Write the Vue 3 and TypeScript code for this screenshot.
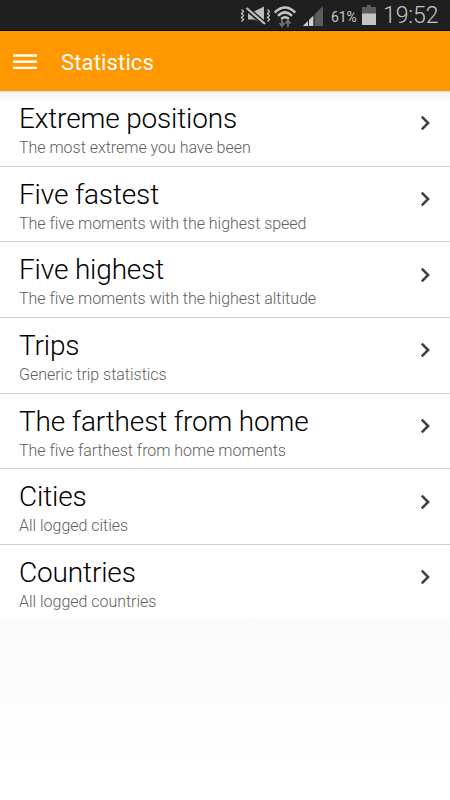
<script setup lang="ts">
interface Row { title: string; subtitle: string }
const rows: Row[] = [
  { title: 'Extreme positions', subtitle: 'The most extreme you have been' },
  { title: 'Five fastest', subtitle: 'The five moments with the highest speed' },
  { title: 'Five highest', subtitle: 'The five moments with the highest altitude' },
  { title: 'Trips', subtitle: 'Generic trip statistics' },
  { title: 'The farthest from home', subtitle: 'The five farthest from home moments' },
  { title: 'Cities', subtitle: 'All logged cities' },
  { title: 'Countries', subtitle: 'All logged countries' },
]
</script>

<template>
  <div class="screen">
    <header class="status">
      <svg class="mute" viewBox="0 0 30 20" width="30" height="20">
        <path d="M8 5.500h6L24 .5v18l-10-5H8z" fill="#bdbdbd" />
        <path d="M6 2.500l20 17.500" stroke="#1f1f1f" stroke-width="4" />
        <path d="M7 1.500l19 16.500" stroke="#1f1f1f" stroke-width="3.500" />
        <path d="M6.500 2l18.500 16" stroke="#bdbdbd" stroke-width="2.200" />
        <path d="M1.500 3.500l2 2-2 2 2 2-2 2 2 2-2 2M27.500 3.500l2 2-2 2 2 2-2 2 2 2-2 2" fill="none" stroke="#bdbdbd" stroke-width="1.400" />
      </svg>
      <svg class="wifi" viewBox="0 0 22 22" width="22" height="22">
        <path d="M.8 6.500Q11-3.500 21.200 6.500M4 9.800Q11 3 18 9.800M7.200 13Q11 9.500 14.800 13" fill="none" stroke="#c4c4c4" stroke-width="2.500" />
        <path d="M8 13.500v6M5.500 17L8 20l2.500-3M14 21v-6M11.500 17.500l2.500-3 2.500 3" fill="none" stroke="#707070" stroke-width="1.800" />
      </svg>
      <svg class="signal" viewBox="0 0 20 20" width="20" height="20">
        <path d="M0 20L20 0v20z" fill="#5c5c5c" />
        <path d="M0 20L10.500 9.500V20z" fill="#d0d0d0" />
        <path d="M5.500 11v9M11 7v13" stroke="#1f1f1f" />
      </svg>
      <span class="percent">61%</span>
      <svg class="battery" viewBox="0 0 14 20" width="14" height="20">
        <path d="M5 0h4v2h5v7H0V2h5z" fill="#5c5c5c" /><path d="M0 8.500h14V20H0z" fill="#c4c4c4" />
      </svg>
      <span class="clock">19:52</span>
    </header>
    <nav class="bar">
      <svg class="menu" viewBox="0 0 24 16" width="24" height="16"><path d="M0 1.500h24M0 7.700h24M0 13.900h24" stroke="#fff" stroke-width="2.400" /></svg>
      <h1>Statistics</h1>
    </nav>
    <ul class="list">
      <li v-for="row in rows" :key="row.title">
        <div class="copy"><h2>{{ row.title }}</h2><p>{{ row.subtitle }}</p></div>
        <svg class="chevron" viewBox="0 0 10 16" width="10" height="16"><path d="M1.800 1.700L8.100 8l-6.300 6.300" fill="none" stroke="#424242" stroke-width="2.600" /></svg>
      </li>
    </ul>
    <div class="rest"></div>
  </div>
</template>

<style>
body { margin: 0; }
</style>
<style scoped>
.screen { display: flex; flex-direction: column; width: 450px; height: 800px; font-family: Roboto, sans-serif; background: #fff; overflow: hidden; }
.status { display: flex; align-items: center; flex: none; height: 31px; background: #1f1f1f; color: #c4c4c4; padding: 0 0 0 240px; box-sizing: border-box; border-bottom: 1px solid #080808; }
.status svg { flex: none; }
.mute { margin-top: 1px; }
.wifi { margin: 3px 0 0 4px; }
.signal { margin: 2px 0 0 7px; }
.percent { width: 31px; margin: 3px 0 0 8px; font-size: 14px; letter-spacing: -.1px; }
.clock { font-size: 23px; font-weight: 300; margin: 1px 0 0 7px; line-height: 30px; letter-spacing: -.1px; }
.bar { display: flex; align-items: center; flex: none; height: 60px; background: #ff9800; padding-left: 13px; color: #fff; }
.menu { margin-top: 1px; }
h1 { margin: 3px 0 0 24px; font-size: 22px; line-height: 26px; font-weight: 400; letter-spacing: .15px; }
.list { flex: none; list-style: none; margin: 0; padding: 0; background: linear-gradient(#c8c8c8 0, #f2f2f2 1px, #fff 12px); }
li { display: flex; justify-content: space-between; height: 75.670px; box-sizing: border-box; border-bottom: 1px solid #d2d2d2; padding: 0 20px 0 19px; }
li:last-child { height: 74.500px; border-bottom: 0; }
h2 { margin: 11px 0 0; font-size: 28px; line-height: 34px; font-weight: 300; letter-spacing: -.15px; color: #000; }
p { margin: 2px 0 0; font-size: 16px; line-height: 20px; font-weight: 300; letter-spacing: -.02px; color: #606060; }
.chevron { margin-top: 24.400px; }
.rest { flex: 1; background: linear-gradient(#fafafa, #fff 85%); }
</style>
